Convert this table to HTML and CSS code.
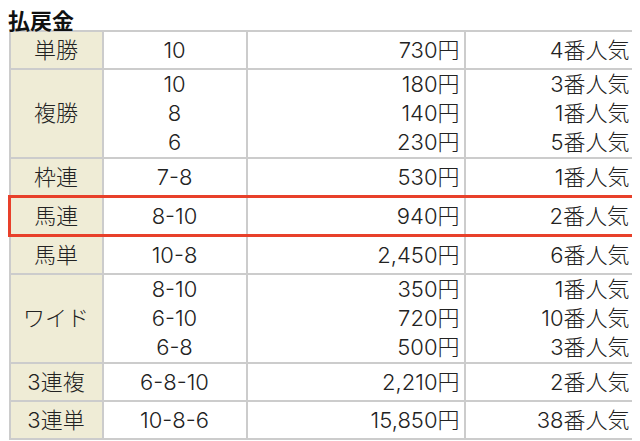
FILE: index.html
```html
<!DOCTYPE html>
<html lang="ja">
<head>
<meta charset="utf-8">
<title>払戻金</title>
<link rel="stylesheet" href="styles.css">
</head>
<body>
<h2 class="title">払戻金</h2>
<table class="payout">
  <colgroup>
    <col class="c-type"><col class="c-num"><col class="c-pay"><col class="c-pop">
  </colgroup>
  <tbody>
    <tr><th>単勝</th><td class="num">10</td><td class="pay">730円</td><td class="pop">4番人気</td></tr>
    <tr><th>複勝</th><td class="num">10<br>8<br>6</td><td class="pay">180円<br>140円<br>230円</td><td class="pop">3番人気<br>1番人気<br>5番人気</td></tr>
    <tr><th>枠連</th><td class="num">7-8</td><td class="pay">530円</td><td class="pop">1番人気</td></tr>
    <tr class="hit"><th>馬連</th><td class="num">8-10</td><td class="pay">940円</td><td class="pop">2番人気</td></tr>
    <tr><th>馬単</th><td class="num">10-8</td><td class="pay">2,450円</td><td class="pop">6番人気</td></tr>
    <tr><th>ワイド</th><td class="num">8-10<br>6-10<br>6-8</td><td class="pay">350円<br>720円<br>500円</td><td class="pop">1番人気<br>10番人気<br>3番人気</td></tr>
    <tr><th>3連複</th><td class="num">6-8-10</td><td class="pay">2,210円</td><td class="pop">2番人気</td></tr>
    <tr><th>3連単</th><td class="num">10-8-6</td><td class="pay">15,850円</td><td class="pop">38番人気</td></tr>
  </tbody>
</table>
</body>
</html>
```
FILE: styles.css
```css
body {
  margin: 8px;
  background: #ffffff;
  color: #222222;
  font-family: "Noto Sans CJK JP", "Noto Sans", sans-serif;
}
.title {
  margin: 0;
  font-size: 22px;
  font-weight: bold;
  line-height: 22px;
  color: #111111;
}
.payout {
  border-collapse: collapse;
  width: 625px;
  table-layout: fixed;
  font-family: Inter, "Noto Sans CJK JP", sans-serif;
  font-size: 22px;
  font-weight: 300;
}
.c-type { width: 93px; }
.c-num { width: 144px; }
.c-pay { width: 218px; }
.c-pop { width: 170px; }
.payout th,
.payout td {
  border: 2px solid #cccccc;
  padding: 0 4px;
  height: 36px;
  line-height: 29px;
  vertical-align: middle;
  white-space: nowrap;
}
.payout th {
  background: #efecd6;
  font-weight: 300;
  text-align: center;
}
.payout .num { text-align: center; }
.payout .pay,
.payout .pop { text-align: right; }
.payout .hit th,
.payout .hit td {
  border-top: 3px solid #e8402a;
  border-bottom: 3px solid #e8402a;
}
.payout .hit th { border-left: 3px solid #e8402a; }
.payout .hit .pop { border-right: 3px solid #e8402a; }
```
